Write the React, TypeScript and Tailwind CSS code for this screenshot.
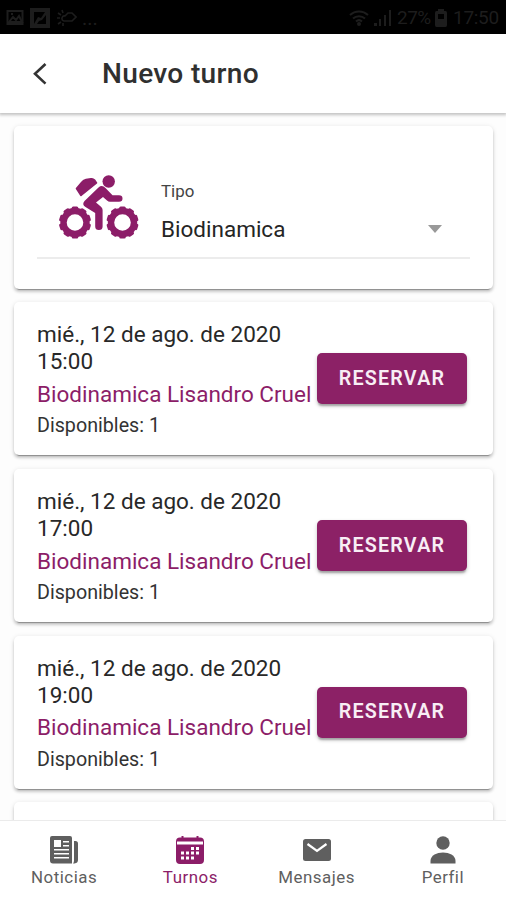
import React from 'react';

const turnos = [
  { fecha: 'mié., 12 de ago. de 2020', hora: '15:00', clase: 'Biodinamica Lisandro Cruel', disponibles: 1 },
  { fecha: 'mié., 12 de ago. de 2020', hora: '17:00', clase: 'Biodinamica Lisandro Cruel', disponibles: 1 },
  { fecha: 'mié., 12 de ago. de 2020', hora: '19:00', clase: 'Biodinamica Lisandro Cruel', disponibles: 1 },
];

const cardShadow =
  'shadow-[0_4px_1px_-3px_rgba(0,0,0,0.3),0_3px_3px_0_rgba(0,0,0,0.16),0_1px_5px_0_rgba(0,0,0,0.12)]';

function StatusBar() {
  return (
    <div className="flex h-[34px] shrink-0 items-center justify-between bg-black pt-px text-[#1d1d1d]">
      <div className="flex items-center pl-[6px]">
        <svg className="h-[18px] w-[18px]" viewBox="0 0 18 18" fill="none" stroke="currentColor" strokeWidth="2">
          <rect x="1.5" y="2" width="15" height="13" />
          <path d="M3 13l4-5 3 3 3-4 3 6zM5 5h2" />
        </svg>
        <svg className="ml-[6px] h-[20px] w-[20px]" viewBox="0 0 20 20" fill="currentColor">
          <path fillRule="evenodd" d="M0 0h20v20H0zM4 4v12L8 9l3 1 4-6zM16 7l-4 5-3 1-2 3h9z" />
        </svg>
        <svg className="ml-[6px] h-[18px] w-[21px]" viewBox="0 0 21 18" fill="none" stroke="currentColor" strokeWidth="1.6">
          <path d="M8 12h8l4-4-4-4h-4L9 7a2.5 2.5 0 0 0-1 5zM1 9h3M2 4l3 2M6 1l1 3M2 15l3-2M7 17v-3" />
        </svg>
        <span className="ml-[5px] text-[20px] leading-[20px]">...</span>
      </div>
      <div className="flex items-center pr-[7px] text-[19px] leading-[22px]">
        <svg className="h-[16px] w-[20px]" viewBox="0 0 20 16" fill="none" stroke="currentColor" strokeWidth="2">
          <path d="M1 5a13 13 0 0 1 18 0M4 8.5a9 9 0 0 1 12 0M7 11.5a4.5 4.5 0 0 1 6 0" />
          <circle cx="10" cy="14" r="1" />
        </svg>
        <svg className="ml-[5px] h-[17px] w-[18px]" viewBox="0 0 18 17" fill="currentColor">
          <path d="M0 14h3v3H0zM5 10h2v7H5zM10 6h2v11h-2zM15 1h2v16h-2z" />
        </svg>
        <span className="ml-[5px] w-[35px] tracking-[-0.5px]">27%</span>
        <svg className="ml-[3px] h-[18px] w-[12px]" viewBox="0 0 12 18" fill="currentColor">
          <path fillRule="evenodd" d="M3 0h6v2h1.500Q12 2 12 4v12q0 2-1.500 2h-9Q0 18 0 16V4q0-2 1.500-2H3zM3 5v5h6V5z" />
        </svg>
        <span className="ml-[6px] w-[46px] tracking-[-0.3px]">17:50</span>
      </div>
    </div>
  );
}

function Header() {
  return (
    <header className="z-10 flex h-[79px] shrink-0 items-center bg-white shadow-[0_1px_3px_1px_rgba(0,0,0,0.24)]">
      <svg className="ml-[32px] h-[24px] w-[16px]" viewBox="0 0 16 24" fill="none" stroke="#333" strokeWidth="2.6">
        <path d="M13.5 2 3 11.8l10.5 9.8" />
      </svg>
      <h1 className="ml-[54px] text-[28.1px] font-medium leading-[34px] tracking-[0.3px] text-[#303030]">Nuevo turno</h1>
    </header>
  );
}

const dientes = [0, 36, 72, 108, 144, 180, 216, 252, 288, 324];

function Rueda({ cx }: { cx: number }) {
  return (
    <g transform={`translate(${cx} 47.5)`}>
      <circle r="11.5" fill="none" stroke="currentColor" strokeWidth="6.4" />
      {dientes.map((a) => (
        <rect key={a} x="-3.3" y="-16" width="6.6" height="5" rx="1.5" transform={`rotate(${a})`} />
      ))}
    </g>
  );
}

function BikerIcon() {
  return (
    <svg className="h-[66px] w-[80px]" viewBox="0 0 80 66" fill="currentColor">
      <Rueda cx={16} />
      <Rueda cx={63.5} />
      <circle cx="49.7" cy="6.5" r="6.2" />
      <path
        d="M17.5 13.5 23 7Q24.6 5 27 4.6L32 3.8Q34.2 3.5 35.500 5L37.500 8 22 20.500Z"
        stroke="currentColor"
        strokeWidth="1.6"
        strokeLinejoin="round"
      />
      <path d="M25.5 26Q22.5 29.5 26.5 32L36.2 38V51.5Q36.2 55 39.9 55T43.6 51.5V35Q43.6 33 42 31.8L37 27.5 44 22 48 25.5Q49.3 26.7 51 26.7H60Q63.5 26.7 63.5 23.5T60 20.300H53.5L46.5 13Q43 9.5 39.5 12.5Z" />
    </svg>
  );
}

function TipoCard() {
  return (
    <section className={`flex h-[163px] shrink-0 rounded-[5px] bg-white px-[23px] ${cardShadow}`}>
      <div className="mt-[30px] flex h-[103px] w-full border-b-2 border-[#ececec] text-[#8c1d68]">
        <div className="ml-[22px] mt-[19px]">
          <BikerIcon />
        </div>
        <div className="ml-[22px] flex-1 pt-[24px] text-[#252525]">
          <p className="text-[16.9px] leading-[22px] text-[#444]">Tipo</p>
          <div className="mt-[13px] flex items-center justify-between pr-[28px]">
            <span className="text-[22.5px] leading-[28px]">Biodinamica</span>
            <svg className="h-[8px] w-[14px]" viewBox="0 0 14 8" fill="#999">
              <path d="M0 0h14L7 8z" />
            </svg>
          </div>
        </div>
      </div>
    </section>
  );
}

function TurnoCard({ turno }: { turno: (typeof turnos)[number] }) {
  return (
    <section className={`flex h-[153px] shrink-0 items-start rounded-[5px] bg-white pl-[23px] pr-[26px] ${cardShadow}`}>
      <div className="min-w-0 flex-1 whitespace-nowrap pt-[19px] text-[22.5px] leading-[27px] text-[#282828]">
        <p>{turno.fecha}</p>
        <p>{turno.hora}</p>
        <p className="mt-[5.6px] text-[#8c1d68]">{turno.clase}</p>
        <p className="mt-[5.4px] text-[19.7px] leading-[25px] text-[#333]">
          Disponibles: {turno.disponibles}
        </p>
      </div>
      <button className="mt-[51px] h-[51px] w-[150px] shrink-0 rounded-[5px] bg-[#8c2166] text-[19.7px] font-semibold tracking-[1.2px] text-[#f8eef5] shadow-[0_3px_2px_-1px_rgba(0,0,0,0.25),0_2px_4px_0_rgba(0,0,0,0.2)]">
        RESERVAR
      </button>
    </section>
  );
}

function NewsIcon() {
  return (
    <svg className="h-[28px] w-[28px]" viewBox="0 0 28 28" fill="currentColor">
      <path fillRule="evenodd" d="M2 0h18q2 0 2 2v25.500H3q-3 0-3-3V2q0-2 2-2zM4 4v7h7V4zM13 5v1.500h6V5zM13 9v1.500h6V9zM4 13v1.500h15V13zM4 17v1.500h15V17zM4 21v1.500h15V21z" />
      <path d="M24 5h1.500Q28 5 28 7.500V24q0 3-3.500 3.500H23q1-1 1-3z" />
    </svg>
  );
}

function CalendarIcon() {
  return (
    <svg className="h-[28px] w-[28px]" viewBox="0 0 28 28" fill="currentColor">
      <path d="M4 1.500h1.500V0h2v1.500h13V0h2v1.500H24q4 0 4 4H0q0-4 4-4z" />
      <path fillRule="evenodd" d="M0 8.500h28V24q0 4-4 4H4q-4 0-4-4zM15 11v3h3v-3zM20 11v3h3v-3zM5 15.500v3h3v-3zM10 15.500v3h3v-3zM15 15.500v3h3v-3zM20 15.500v3h3v-3zM5 20.500v3h3v-3zM10 20.500v3h3v-3zM15 20.500v3h3v-3z" />
      <path d="M.5 5v5M27.500 5v5" stroke="currentColor" />
    </svg>
  );
}

function MailIcon() {
  return (
    <svg className="h-[28px] w-[28px]" viewBox="0 0 28 28">
      <rect y="3" width="28" height="22" rx="2.5" fill="currentColor" />
      <path d="M4.500 8 14 15l9.500-7" fill="none" stroke="#fff" strokeWidth="2.2" />
    </svg>
  );
}

function PersonIcon() {
  return (
    <svg className="h-[28px] w-[28px]" viewBox="0 0 28 28" fill="currentColor">
      <circle cx="14" cy="7" r="6.7" />
      <path d="M1.500 27.500v-2.500q0-4 4-6.500 3.500-2 8.500-2t8.500 2q4 2.500 4 6.500v2.500z" />
    </svg>
  );
}

const tabs = [
  { label: 'Noticias', icon: <NewsIcon /> },
  { label: 'Turnos', icon: <CalendarIcon />, active: true },
  { label: 'Mensajes', icon: <MailIcon /> },
  { label: 'Perfil', icon: <PersonIcon /> },
];

function TabBar() {
  return (
    <nav className="z-10 grid h-[80px] shrink-0 grid-cols-4 border-t border-[#ebebeb] bg-white pl-px">
      {tabs.map((tab) => (
        <div
          key={tab.label}
          className={`flex flex-col items-center pt-[15px] ${tab.active ? 'text-[#8c1d68]' : 'text-[#5f5f5f]'}`}
        >
          {tab.icon}
          <span className="mt-[2px] text-[16.9px] leading-[22px] tracking-[0.5px]">{tab.label}</span>
        </div>
      ))}
    </nav>
  );
}

export default function App() {
  return (
    <div className="flex h-[900px] w-[506px] flex-col overflow-hidden bg-[#fdfdfd] font-[Roboto,sans-serif]">
      <StatusBar />
      <Header />
      <main className="flex min-h-0 flex-1 flex-col gap-[13.7px] overflow-hidden pl-[14px] pr-[13px] pt-[12.7px]">
        <TipoCard />
        {turnos.map((turno) => (
          <TurnoCard key={turno.hora} turno={turno} />
        ))}
        <section className={`h-[153px] shrink-0 rounded-[5px] bg-white ${cardShadow}`} />
      </main>
      <TabBar />
    </div>
  );
}
